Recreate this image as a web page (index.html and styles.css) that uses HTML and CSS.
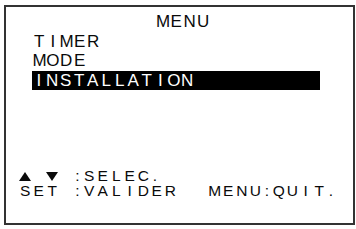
FILE: index.html
```html
<!DOCTYPE html>
<html>
<head>
<meta charset="utf-8">
<link rel="stylesheet" href="styles.css">
</head>
<body>
<div class="screen">
  <div class="menu">
    <div class="row title"><span class="c">M</span><span class="c">E</span><span class="c">N</span><span class="c">U</span></div>
    <div class="row item"><span class="c">T</span><span class="c">I</span><span class="c">M</span><span class="c">E</span><span class="c">R</span></div>
    <div class="row item"><span class="c">M</span><span class="c">O</span><span class="c">D</span><span class="c">E</span></div>
    <div class="row item selected"><span class="c">I</span><span class="c">N</span><span class="c">S</span><span class="c">T</span><span class="c">A</span><span class="c">L</span><span class="c">L</span><span class="c">A</span><span class="c">T</span><span class="c">I</span><span class="c">O</span><span class="c">N</span></div>
  </div>
  <div class="footer">
    <div class="row"><span class="c"><svg class="tri" width="12" height="9" viewBox="0 0 12 9"><polygon points="6,0 12,9 0,9"/></svg></span><span class="c">&nbsp;</span><span class="c"><svg class="tri" width="12" height="9" viewBox="0 0 12 9"><polygon points="0,0 12,0 6,9"/></svg></span><span class="c">&nbsp;</span><span class="c n">:</span><span class="c">S</span><span class="c">E</span><span class="c">L</span><span class="c">E</span><span class="c">C</span><span class="c n">.</span></div>
    <div class="row"><span class="c">S</span><span class="c">E</span><span class="c">T</span><span class="c">&nbsp;</span><span class="c n">:</span><span class="c">V</span><span class="c">A</span><span class="c">L</span><span class="c">I</span><span class="c">D</span><span class="c">E</span><span class="c">R</span><span class="c w">&nbsp;</span><span class="c w">&nbsp;</span><span class="c">M</span><span class="c">E</span><span class="c">N</span><span class="c">U</span><span class="c n">:</span><span class="c">Q</span><span class="c">U</span><span class="c">I</span><span class="c">T</span><span class="c n">.</span></div>
  </div>
</div>
</body>
</html>
```
FILE: styles.css
```css
html, body {
  margin: 0;
  padding: 0;
  background: #fff;
}
body {
  font-family: "Liberation Sans", Arial, sans-serif;
  color: #0a0a0a;
}
.screen {
  box-sizing: border-box;
  margin: 5px 0 0 4px;
  width: 351px;
  height: 220px;
  border: 2px solid #333;
  padding: 5px 0 0 12.5px;
  display: flex;
  flex-direction: column;
}
.menu {
  font-size: 17px;
  line-height: 19.5px;
}
.row {
  white-space: nowrap;
}
.c {
  display: inline-block;
  width: 13.5px;
  text-align: center;
}
.c.n {
  width: 10px;
}
.c.w {
  width: 15.5px;
}
.title {
  margin-left: 137.5px;
}
.item {
  margin-left: 14px;
}
.selected {
  margin-left: 13.5px;
  width: 288px;
  background: #000;
  color: #fff;
}
.footer {
  margin-top: auto;
  padding-bottom: 24.5px;
  font-size: 15.5px;
  line-height: 15.5px;
}
.tri {
  display: inline-block;
  vertical-align: baseline;
  fill: #0a0a0a;
}
```
